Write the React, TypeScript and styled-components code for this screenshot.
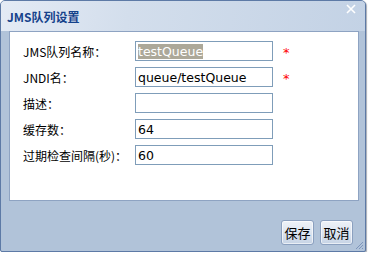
import React from "react";
import styled, { createGlobalStyle } from "styled-components";

const GlobalStyle = createGlobalStyle`
  *, *::before, *::after {
    box-sizing: border-box;
  }
  html, body {
    margin: 0;
    padding: 0;
    background: #ffffff;
  }
  body {
    font-family: "Noto Sans CJK SC", "DejaVu Sans", sans-serif;
  }
`;

const Window = styled.div`
  position: relative;
  width: 366px;
  height: 252px;
  border: 1px solid #5d7aa6;
  border-radius: 5px 5px 2px 2px;
  background: #b1c3d9;
  box-shadow: 1px 1px 1px rgba(60, 70, 90, 0.45);
  display: flex;
  flex-direction: column;
  overflow: hidden;
`;

const TitleBar = styled.div`
  height: 30px;
  flex: none;
  display: flex;
  align-items: center;
  justify-content: space-between;
  padding: 0 9px 0 6px;
  background: linear-gradient(100deg, #e4ebf5 0%, #d3deec 35%, #c3d2e5 100%);
`;

const Title = styled.div`
  font-family: "Noto Sans CJK SC", "DejaVu Sans", sans-serif;
  font-weight: bold;
  font-size: 12px;
  color: #15428b;
  margin-top: 1px;
`;

const CloseBtn = styled.div`
  width: 10px;
  height: 10px;
  margin-top: -14px;
  display: flex;
`;

const Content = styled.div`
  flex: 1;
  display: flex;
  flex-direction: column;
  padding: 0 6px 0 8px;
`;

const Panel = styled.div`
  height: 170px;
  flex: none;
  background: #ffffff;
  border: 1px solid #8ea3c2;
  padding: 9px 0 0 13px;
  display: flex;
  flex-direction: column;
  gap: 6px;
`;

const Row = styled.div`
  display: flex;
  align-items: center;
  height: 20px;
`;

const Label = styled.div`
  width: 112px;
  flex: none;
  font-size: 12px;
  color: #000;
  white-space: nowrap;
`;

const Field = styled.div`
  width: 138px;
  height: 20px;
  flex: none;
  border: 1px solid #7f9db9;
  display: flex;
  align-items: center;
  padding-left: 2px;
  font-family: "DejaVu Sans", Verdana, sans-serif;
  font-size: 12.5px;
  color: #000;
`;

const Selected = styled.span`
  background: #aca899;
  color: #ffffff;
  line-height: 15px;
`;

const Required = styled.span`
  margin-left: 10px;
  color: #ff0000;
  font-size: 13px;
  font-family: "DejaVu Sans", sans-serif;
  line-height: 1;
  margin-top: 3px;
`;

const Footer = styled.div`
  flex: 1;
  display: flex;
  justify-content: flex-end;
  align-items: flex-start;
  gap: 6px;
  padding: 19px 6px 0 0;
`;

const Button = styled.button`
  width: 33px;
  height: 25px;
  padding: 0;
  border: 1px solid #8ba0bf;
  border-radius: 3px;
  background: linear-gradient(180deg, #eef2f8 0%, #dde5f0 50%, #c6d3e5 100%);
  font-family: "Noto Sans CJK SC", sans-serif;
  font-size: 13px;
  color: #000;
  box-shadow: inset 0 0 0 1px rgba(255, 255, 255, 0.6);
`;

const Grip = styled.svg`
  position: absolute;
  right: 1px;
  bottom: 1px;
`;

const fields = [
  { label: "JMS队列名称：", value: "testQueue", selected: true, required: true },
  { label: "JNDI名：", value: "queue/testQueue", required: true },
  { label: "描述：", value: "" },
  { label: "缓存数：", value: "64" },
  { label: "过期检查间隔(秒)：", value: "60" },
];

export default function App() {
  return (
    <>
      <GlobalStyle />
      <Window>
        <TitleBar>
          <Title>JMS队列设置</Title>
          <CloseBtn>
            <svg width="10" height="10" viewBox="0 0 10 10">
              <path d="M1 1 L9 9 M9 1 L1 9" stroke="#ffffff" strokeWidth="1.6" />
            </svg>
          </CloseBtn>
        </TitleBar>
        <Content>
          <Panel>
            {fields.map((f) => (
              <Row key={f.label}>
                <Label>{f.label}</Label>
                <Field>{f.selected ? <Selected>{f.value}</Selected> : f.value}</Field>
                {f.required && <Required>*</Required>}
              </Row>
            ))}
          </Panel>
          <Footer>
            <Button>保存</Button>
            <Button>取消</Button>
          </Footer>
        </Content>
        <Grip width="10" height="10" viewBox="0 0 10 10">
          <path d="M9 2 L2 9 M9 5 L5 9 M9 8 L8 9" stroke="#7d95bb" strokeWidth="1" />
        </Grip>
      </Window>
    </>
  );
}
